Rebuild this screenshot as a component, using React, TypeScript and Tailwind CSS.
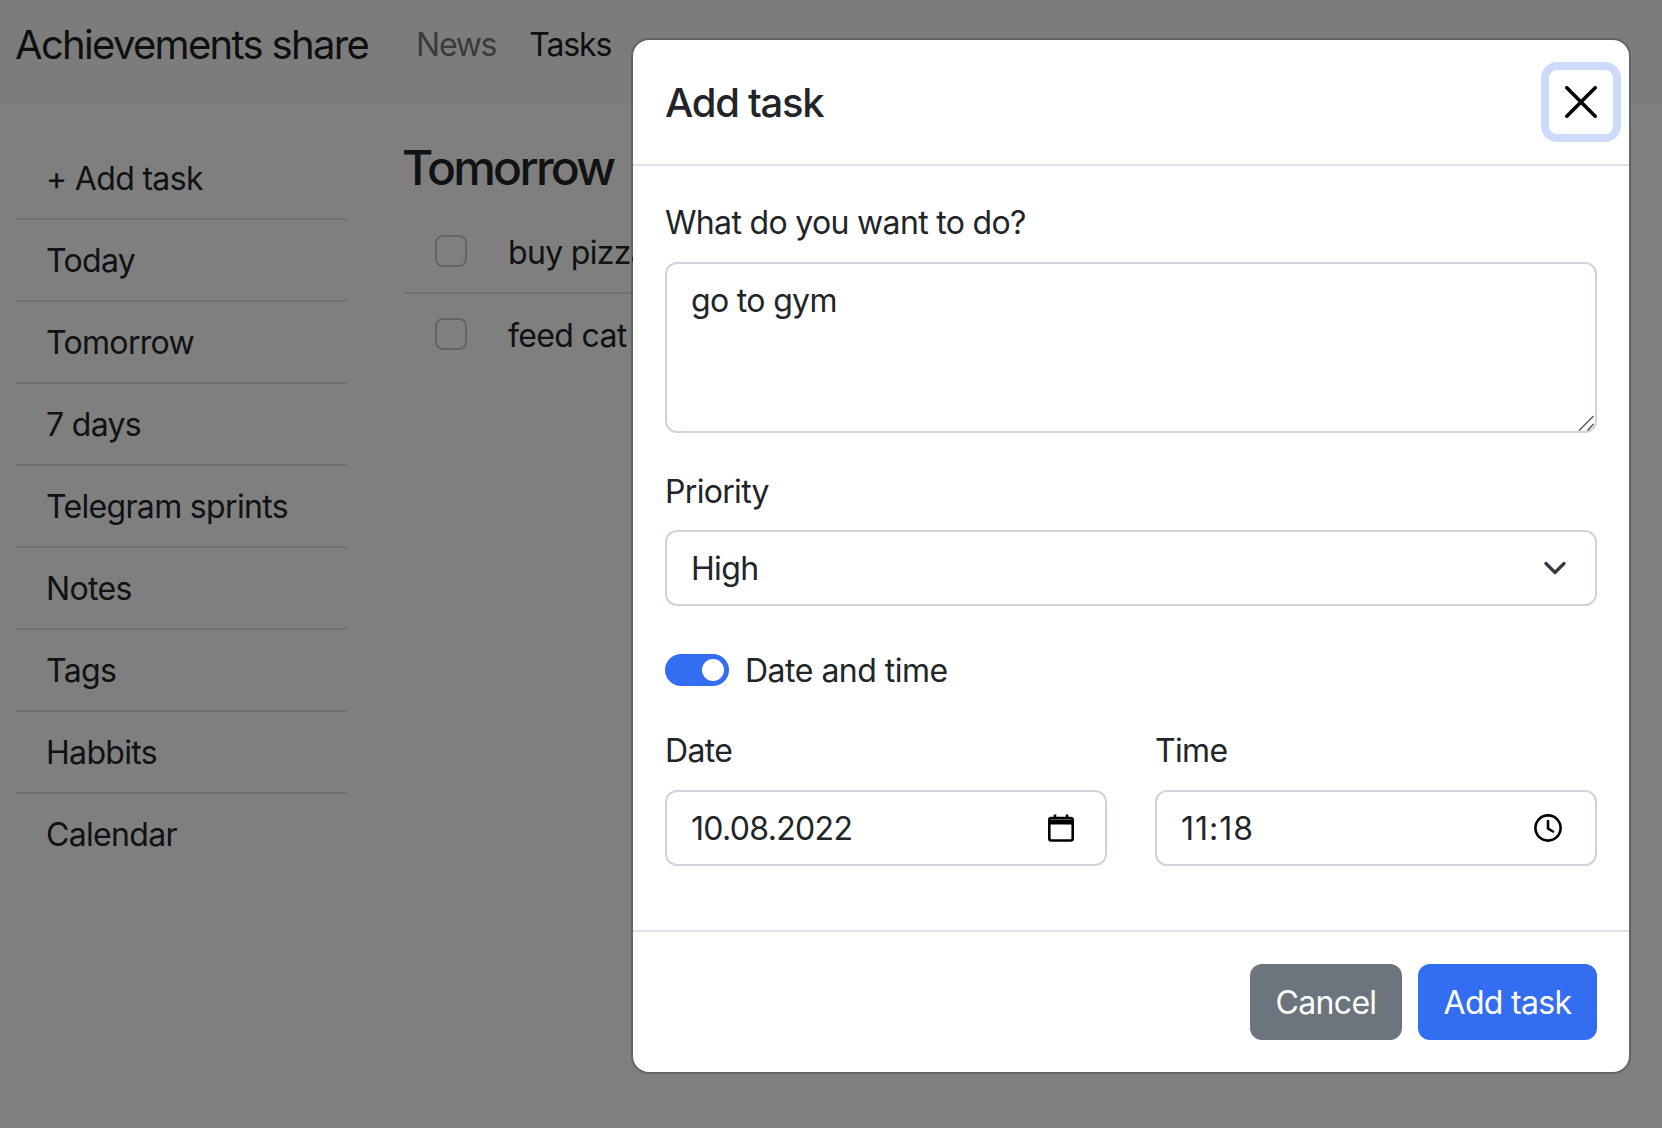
import React from "react";

const font = { fontFamily: "Inter, 'Liberation Sans', sans-serif" };
const side = ["+ Add task", "Today", "Tomorrow", "7 days", "Telegram sprints", "Notes", "Tags", "Habbits", "Calendar"];
const tasks = ["buy pizza", "feed cat"];

function Field({ children, className = "" }: { children: React.ReactNode; className?: string }) {
  return (
    <div className={`flex h-[76px] items-center justify-between rounded-[12px] border-2 border-[#ced4da] bg-white pl-[24px] text-[#212529] ${className}`}>
      {children}
    </div>
  );
}

export default function App() {
  return (
    <div className="relative h-[1128px] w-[1662px] overflow-hidden bg-white text-[32px] leading-[48px] text-[#212529] tracking-[-0.67px]" style={font}>
      <nav className="flex h-[105px] items-center bg-[#f8f9fa] pl-[15px] pb-[15px]">
        <span className="text-[40px] leading-[60px] tracking-[-1.68px] text-black/90">Achievements share</span>
        <span className="ml-[48px] tracking-[-1.3px] text-black/55">News</span>
        <span className="ml-[33px] tracking-[-1.1px] text-black/90">Tasks</span>
      </nav>
      <div className="flex pl-[15px]">
        <ul className="mt-[33px] w-[332px]">
          {side.map((s, i) => (
            <li key={s} className={`h-[82px] pl-[31px] pt-[17px] ${i < side.length - 1 ? "border-b-2 border-[#dee2e6]" : ""}`}>{s}</li>
          ))}
        </ul>
        <div className="ml-[56px] mt-[32px] w-[800px]">
          <h3 className="-ml-[1px] text-[48px] font-medium leading-[62px] tracking-[-2.7px]">Tomorrow</h3>
          <div className="mt-[13px]">
            {tasks.map((t, i) => (
              <div key={t} className={`flex h-[82px] items-center pb-[2px] pl-[32px] ${i === 0 ? "border-b-2 border-[#dee2e6]" : ""}`}>
                <span className="h-[32px] w-[32px] rounded-[8px] border-2 border-[#c4c8cc] bg-white" />
                <span className="ml-[41px] translate-y-[2px]">{t}</span>
              </div>
            ))}
          </div>
        </div>
      </div>

      <div className="absolute inset-0 bg-black/50" />

      <div className="absolute left-[633px] top-[40px] flex h-[1032px] w-[996px] flex-col rounded-[16px] bg-white shadow-[0_0_0_2px_rgba(0,0,0,0.2)]">
        <header className="flex h-[126px] items-center justify-between border-b-2 border-[#dee2e6] pl-[32px] pr-[8px]">
          <h5 className="translate-y-[1px] text-[40px] font-medium leading-[60px] tracking-[-1.3px]">Add task</h5>
          <button className="flex h-[80px] w-[80px] items-center justify-center rounded-[16px] border-[8px] border-[#ccdafc] bg-white">
            <svg width="32" height="32" viewBox="0 0 32 32" fill="none" stroke="#000" strokeWidth="3.6" strokeLinecap="round">
              <path d="M1.8 1.8 30.2 30.2M30.2 1.8 1.8 30.2" />
            </svg>
          </button>
        </header>

        <div className="flex-1 px-[32px] pt-[33px]">
          <label className="block">What do you want to do?</label>
          <div className="relative mt-[15px]">
            <textarea
              defaultValue="go to gym"
              className="block h-[171px] w-full resize-none rounded-[12px] border-2 border-[#ced4da] bg-white px-[24px] pb-[11px] pt-[13px] outline-none"
            />
            <svg className="absolute bottom-[2px] right-[3px]" width="16" height="16" viewBox="0 0 16 16" fill="none" stroke="#555" strokeWidth="1.4">
              <path d="M1 15.5 15.5 1M9.5 15.5 15.5 9" />
            </svg>
          </div>
          <label className="mt-[35px] block">Priority</label>
          <Field className="mt-[14px] pr-[29px]">
            <span className="translate-y-[1px]">High</span>
            <svg width="22" height="14" viewBox="0 0 22 14" fill="none" stroke="#343a40" strokeWidth="3.2" strokeLinecap="round" strokeLinejoin="round">
              <path d="M2 2.5 11 11.5 20 2.5" />
            </svg>
          </Field>
          <div className="mt-[40px] flex items-center">
            <span className="flex h-[32px] w-[64px] items-center justify-end rounded-full bg-[#326df2] pr-[5px]">
              <span className="h-[22px] w-[22px] rounded-full bg-white" />
            </span>
            <span className="ml-[16px] translate-y-[1px] tracking-[-0.5px]">Date and time</span>
          </div>
          <div className="mt-[33px] grid grid-cols-2 gap-x-[48px]">
            <div>
              <label className="block">Date</label>
              <Field className="mt-[15px] pr-[31px]">
                <span className="translate-y-[1px]">10.08.2022</span>
                <svg width="26" height="28" viewBox="0 0 26 28" fill="none" stroke="#000" strokeWidth="2.6" strokeLinejoin="round">
                  <rect x="1.3" y="4" width="23.4" height="22.5" rx="2" />
                  <path d="M1.3 8h23.4" strokeWidth="5" />
                  <path d="M7 .5v4M19 .5v4" />
                </svg>
              </Field>
            </div>
            <div>
              <label className="block">Time</label>
              <Field className="mt-[15px] pr-[33px]">
                <span className="translate-y-[1px] tracking-[1px]">11:18</span>
                <svg width="28" height="28" viewBox="0 0 28 28" fill="none" stroke="#000" strokeWidth="2.6" strokeLinecap="round">
                  <circle cx="14" cy="14" r="12.6" />
                  <path d="M14 7v7.5l5 3" />
                </svg>
              </Field>
            </div>
          </div>
        </div>

        <footer className="flex h-[142px] items-start justify-end gap-[16px] border-t-2 border-[#dee2e6] pr-[32px] pt-[32px]">
          <button className="h-[76px] w-[152px] rounded-[12px] bg-[#6c757d] pt-[2px] text-white">Cancel</button>
          <button className="h-[76px] w-[179px] rounded-[12px] bg-[#326df2] pt-[2px] text-white">Add task</button>
        </footer>
      </div>
    </div>
  );
}
